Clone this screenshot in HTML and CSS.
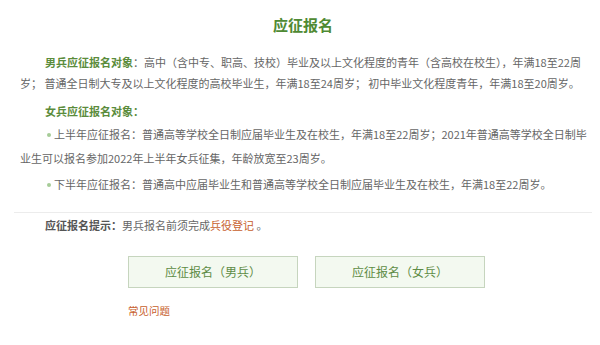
FILE: index.html
```html
<!DOCTYPE html>
<html lang="zh-CN">
<head>
    <meta charset="UTF-8">
    <meta name="viewport" content="width=device-width, initial-scale=1.0">
    <title>应征报名</title>
    <link rel="stylesheet" href="styles.css">
</head>
<body>
    <div class="page">
        <h2 class="title">应征报名</h2>
        <div class="info">
            <p class="male"><b>男兵应征报名对象</b>：高中（含中专、职高、技校）毕业及以上文化程度的青年（含高校在校生），年满18至22周岁； 普通全日制大专及以上文化程度的高校毕业生，年满18至24周岁； 初中毕业文化程度青年，年满18至20周岁。</p>
            <p class="female-head"><b>女兵应征报名对象：</b></p>
            <p class="item"><i class="dot"></i>上半年应征报名：普通高等学校全日制应届毕业生及在校生，年满18至22周岁；2021年普通高等学校全日制毕业生可以报名参加2022年上半年女兵征集，年龄放宽至23周岁。</p>
            <p class="item"><i class="dot"></i>下半年应征报名：普通高中应届毕业生和普通高等学校全日制应届毕业生及在校生，年满18至22周岁。</p>
        </div>
        <div class="tip">
            <b>应征报名提示：</b>男兵报名前须完成<a href="#">兵役登记</a> 。
        </div>
        <div class="buttons">
            <a class="btn" href="#">应征报名（男兵）</a>
            <a class="btn" href="#">应征报名（女兵）</a>
        </div>
        <div class="faq"><a href="#">常见问题</a></div>
    </div>
</body>
</html>
```
FILE: styles.css
```css
body {
    margin: 0;
    background: #fff;
    font-family: "Noto Sans CJK SC", "Microsoft YaHei", sans-serif;
    color: #666;
    font-size: 11px;
}
.page {
    width: 578px;
    margin-left: 14px;
}
.title {
    margin: 0;
    padding-top: 14px;
    height: 22px;
    line-height: 22px;
    text-align: center;
    font-size: 15px;
    font-weight: bold;
    color: #4f8a33;
}
.info {
    padding: 0 4px 16px 6px;
    border-bottom: 1px solid #ececec;
}
.info p {
    margin: 0;
    text-indent: 25px;
}
.info b {
    color: #5b8c3c;
}
.male {
    padding-top: 16px;
    line-height: 21px;
}
.female-head {
    padding-top: 6px;
    line-height: 22px;
}
.item {
    line-height: 24px;
}
.item + .item {
    padding-top: 2px;
}
.dot {
    display: inline-block;
    width: 4px;
    height: 4px;
    border-radius: 50%;
    background: #a6cc98;
    margin: 0 3px 2px 2px;
    vertical-align: middle;
}
.tip {
    padding: 1px 0 0 31px;
    line-height: 22px;
}
.tip b {
    color: #555;
}
.tip a {
    color: #c7602c;
    text-decoration: none;
}
.buttons {
    display: flex;
    gap: 17px;
    padding: 20px 0 0 114px;
}
.btn {
    display: block;
    width: 168px;
    height: 30px;
    line-height: 30px;
    text-align: center;
    background: #f3f9f0;
    border: 1px solid #c6d5be;
    color: #5e8c45;
    font-size: 12px;
    text-decoration: none;
}
.faq {
    padding: 13px 0 0 114px;
    line-height: 18px;
}
.faq a {
    color: #c7602c;
    font-size: 10.5px;
    text-decoration: none;
}
```
